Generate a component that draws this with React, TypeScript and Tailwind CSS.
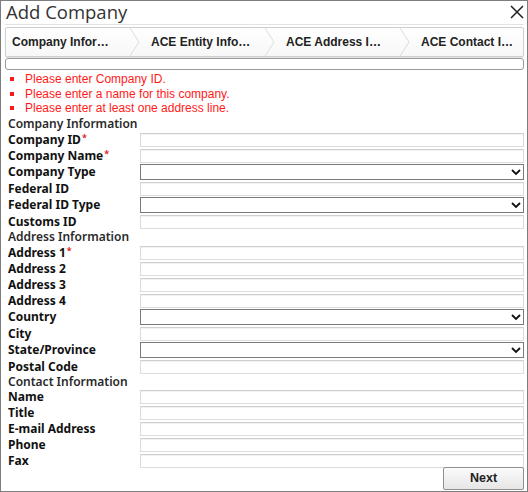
import React from "react";

type Field = { label: string; kind: "input" | "select"; required?: boolean };

const sections: { title: string; fields: Field[] }[] = [
  {
    title: "Company Information",
    fields: [
      { label: "Company ID", kind: "input", required: true },
      { label: "Company Name", kind: "input", required: true },
      { label: "Company Type", kind: "select" },
      { label: "Federal ID", kind: "input" },
      { label: "Federal ID Type", kind: "select" },
      { label: "Customs ID", kind: "input" },
    ],
  },
  {
    title: "Address Information",
    fields: [
      { label: "Address 1", kind: "input", required: true },
      { label: "Address 2", kind: "input" },
      { label: "Address 3", kind: "input" },
      { label: "Address 4", kind: "input" },
      { label: "Country", kind: "select" },
      { label: "City", kind: "input" },
      { label: "State/Province", kind: "select" },
      { label: "Postal Code", kind: "input" },
    ],
  },
  {
    title: "Contact Information",
    fields: [
      { label: "Name", kind: "input" },
      { label: "Title", kind: "input" },
      { label: "E-mail Address", kind: "input" },
      { label: "Phone", kind: "input" },
      { label: "Fax", kind: "input" },
    ],
  },
];

const tabs = ["Company Infor…", "ACE Entity Info…", "ACE Address I…", "ACE Contact I…"];

const errors = [
  "Please enter Company ID.",
  "Please enter a name for this company.",
  "Please enter at least one address line.",
];

function Chevron() {
  return (
    <svg width="12" height="28" viewBox="0 0 12 28" className="shrink-0">
      <polyline points="1,0 10,14 1,28" fill="none" stroke="#dcdcdc" strokeWidth="1" />
    </svg>
  );
}

function Row({ field }: { field: Field }) {
  const isSelect = field.kind === "select";
  return (
    <div className={`flex items-center ${isSelect ? "h-[17px]" : "h-[16px]"}`}>
      <div className="w-[132px] shrink-0 text-[12px] font-bold text-[#111] leading-none">
        {field.label}
        {field.required && (
          <span className="text-[#e02020] text-[9px] leading-none relative -top-[3px] ml-[1px]">*</span>
        )}
      </div>
      {isSelect ? (
        <div className="flex-1 h-[16px] border border-[#7a7a7a] bg-white flex items-center justify-end pr-[2px]">
          <svg width="10" height="7" viewBox="0 0 10 7">
            <polyline points="1,1 5,5 9,1" fill="none" stroke="#111" strokeWidth="1.8" />
          </svg>
        </div>
      ) : (
        <div className="flex-1 h-[14px] border border-[#dcdcdc] border-t-[#cfcfcf] bg-white shadow-[inset_0_1px_1px_rgba(0,0,0,0.06)]" />
      )}
    </div>
  );
}

export default function App() {
  return (
    <div className="w-[528px] h-[492px] border border-[#7d7d7d] bg-white flex flex-col overflow-hidden">
      {/* title bar */}
      <div className="h-[24px] ml-[4px] mr-[3px] flex items-center justify-between border-b border-[#e3e3e3]">
        <span
          className="text-[18.5px] leading-[24px] text-[#333] pl-[1px] -mt-[1px]"
          style={{ fontFamily: '"Open Sans", sans-serif' }}
        >
          Add Company
        </span>
        <svg width="14" height="14" viewBox="0 0 14 14" className="-mt-[2px]">
          <path d="M1 1 L13 13 M13 1 L1 13" stroke="#222" strokeWidth="1.5" />
        </svg>
      </div>

      <div className="pl-[4px] pr-[3px] flex flex-col" style={{ fontFamily: '"Liberation Sans", Arial, sans-serif' }}>
        {/* step tabs */}
        <div className="mt-[2px] h-[30px] border border-[#cfcfcf] rounded-[2px] bg-gradient-to-b from-white to-[#f7f7f7] shadow-[0_1px_1px_rgba(0,0,0,0.12)] flex items-center">
          {tabs.map((t, i) => (
            <div key={t} className="w-[135px] h-full flex items-center shrink-0">
              <span className={`flex-1 text-[12px] font-bold text-[#222] ${i === 0 ? "pl-[6px]" : "pl-[10px]"}`}>{t}</span>
              {i < tabs.length - 1 && <Chevron />}
            </div>
          ))}
        </div>

        {/* progress bar */}
        <div className="mt-[1px] h-[12px] border border-[#9a9a9a] rounded-[3px] bg-white" />

        {/* validation messages */}
        <ul className="mt-[2px] flex flex-col">
          {errors.map((e) => (
            <li key={e} className="h-[14.5px] flex items-center text-[12px] text-[#ff1a1a] leading-none">
              <span className="w-[4px] h-[4px] bg-[#ff1a1a] ml-[5px] mr-[11px]" />
              {e}
            </li>
          ))}
        </ul>

        {/* form */}
        <div className="flex flex-col pl-[3px]" style={{ fontFamily: '"Noto Sans", "Open Sans", sans-serif' }}>
          {sections.map((s, si) => (
            <div key={s.title} className="flex flex-col">
              <div
                className={`flex items-center text-[12px] font-semibold text-[#2a2a2a] leading-[12px] ${
                  si === 0 ? "h-[16px]" : si === 1 ? "h-[15px]" : "h-[14px]"
                }`}
              >
                {s.title}
              </div>
              {s.fields.map((f) => (
                <Row key={f.label} field={f} />
              ))}
            </div>
          ))}
        </div>

        {/* actions */}
        <div className="flex justify-end -mt-[2px]">
          <button className="w-[81px] h-[23px] border border-[#8f8f8f] rounded-[2px] bg-gradient-to-b from-[#fbfbfb] to-[#e6e6e6] text-[12.5px] font-bold text-[#222]">
            Next
          </button>
        </div>
      </div>
    </div>
  );
}
